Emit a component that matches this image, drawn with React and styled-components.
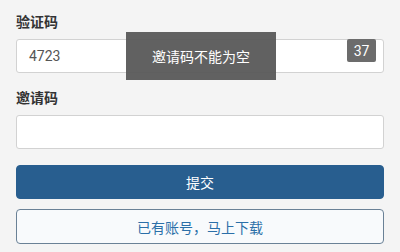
import React from 'react'
import styled, { createGlobalStyle } from 'styled-components'

const GlobalStyle = createGlobalStyle`
  html, body {
    margin: 0;
    padding: 0;
    background: #f4f4f4;
    font-family: Roboto, "Noto Sans CJK SC", sans-serif;
  }
`

const Page = styled.div`
  position: relative;
  width: 400px;
  height: 252px;
  box-sizing: border-box;
  padding: 11px 16px 0;
  background: #f4f4f4;
  overflow: hidden;
`

const Label = styled.div`
  font-size: 14px;
  line-height: 22px;
  font-weight: bold;
  color: #333;
  margin-top: ${(p) => p.$top || 0}px;
  margin-bottom: 6px;
`

const InputWrap = styled.div`
  position: relative;
`

const Input = styled.div`
  height: 34px;
  box-sizing: border-box;
  border: 1px solid #d2d2d2;
  border-radius: 3px;
  background: #fff;
  padding: 0 12px;
  display: flex;
  align-items: center;
  font-size: 14px;
  color: #555;
`

const Badge = styled.span`
  position: absolute;
  top: 0;
  right: 8px;
  width: 29px;
  height: 23px;
  border-radius: 2px;
  background: #6c6c6c;
  color: #fff;
  font-size: 14px;
  display: flex;
  align-items: center;
  justify-content: center;
`

const Button = styled.div`
  height: ${(p) => p.$h}px;
  box-sizing: border-box;
  border-radius: 4px;
  display: flex;
  align-items: center;
  justify-content: center;
  font-size: 14px;
  margin-top: ${(p) => p.$top}px;
  background: ${(p) => (p.$primary ? '#285e8f' : '#f8fafc')};
  color: ${(p) => (p.$primary ? '#fff' : '#2b6fa8')};
  border: 1px solid ${(p) => (p.$primary ? '#285e8f' : '#6a8196')};
`

const Toast = styled.div`
  position: absolute;
  top: 32px;
  left: 126px;
  width: 150px;
  height: 48px;
  background: rgba(88, 88, 88, 0.95);
  color: #fff;
  font-size: 14px;
  display: flex;
  align-items: center;
  justify-content: center;
`

export default function App() {
  return (
    <>
      <GlobalStyle />
      <Page>
        <Label>验证码</Label>
        <InputWrap>
          <Input>4723</Input>
          <Badge>37</Badge>
        </InputWrap>
        <Label $top={14}>邀请码</Label>
        <Input />
        <Button $primary $h={34} $top={16}>提交</Button>
        <Button $h={35} $top={10}>已有账号，马上下载</Button>
        <Toast>邀请码不能为空</Toast>
      </Page>
    </>
  )
}
